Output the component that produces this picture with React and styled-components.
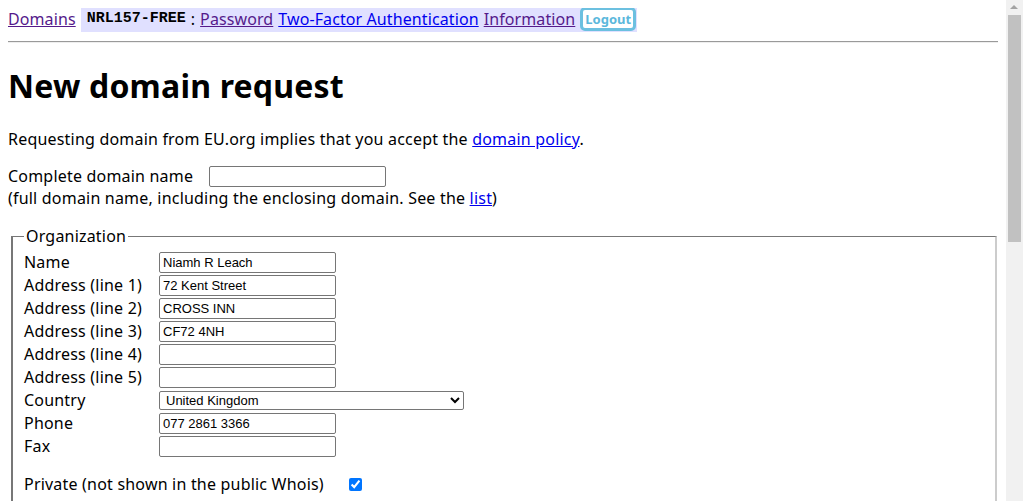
import React from "react";
import styled, { createGlobalStyle } from "styled-components";

const GlobalStyle = createGlobalStyle`
  html, body {
    background: #fff;
  }
  body {
    margin: 8px 25px 8px 8px;
    font-family: "Segoe UI", "Noto Sans", "Open Sans", sans-serif;
    font-size: 16px;
    letter-spacing: 0.2px;
    color: #000;
  }
  a {
    color: #0000ee;
  }
  a.visited {
    color: #551a8b;
  }
`;

const fields = [
  { label: "Name", value: "Niamh R Leach" },
  { label: "Address (line 1)", value: "72 Kent Street" },
  { label: "Address (line 2)", value: "CROSS INN" },
  { label: "Address (line 3)", value: "CF72 4NH" },
  { label: "Address (line 4)", value: "" },
  { label: "Address (line 5)", value: "" },
  { label: "Country", select: "United Kingdom" },
  { label: "Phone", value: "077 2861 3366" },
  { label: "Fax", value: "" },
];

const App = () => {
  return (
    <>
      <GlobalStyle />
      <TopBar>
        <a className="visited" href="#domains">Domains</a>
        <UserBox>
          <Handle>NRL157-FREE</Handle>
          <span>:</span>
          <a className="visited" href="#password">Password</a>
          <a href="#2fa">Two-Factor Authentication</a>
          <a className="visited" href="#info">Information</a>
          <LogoutButton type="button">Logout</LogoutButton>
        </UserBox>
      </TopBar>
      <Rule />
      <Title>New domain request</Title>
      <Intro>
        Requesting domain from EU.org implies that you accept the{" "}
        <a href="#policy">domain policy</a>.
      </Intro>
      <DomainBlock>
        <DomainRow>
          <span>Complete domain name</span>
          <TextInput $width={177} />
        </DomainRow>
        <div>
          (full domain name, including the enclosing domain. See the{" "}
          <a href="#list">list</a>)
        </div>
      </DomainBlock>
      <Fieldset>
        <Legend>Organization</Legend>
        <FieldGrid>
          {fields.map((f) => (
            <React.Fragment key={f.label}>
              <FieldLabel>{f.label}</FieldLabel>
              {f.select ? (
                <Select defaultValue={f.select}>
                  <option>{f.select}</option>
                </Select>
              ) : (
                <TextInput $width={177} defaultValue={f.value} />
              )}
            </React.Fragment>
          ))}
        </FieldGrid>
        <PrivateRow>
          <span>Private (not shown in the public Whois)</span>
          <Check type="checkbox" defaultChecked />
        </PrivateRow>
        <Filler />
      </Fieldset>
      <ScrollTrack>
        <ScrollArrow />
        <ScrollThumb />
      </ScrollTrack>
    </>
  );
};

export default App;

const TopBar = styled.div`
  display: flex;
  align-items: center;
  gap: 5px;
  height: 27px;
  margin-top: -3px;
  line-height: 22px;
  letter-spacing: 0.1px;
`;

const UserBox = styled.div`
  display: flex;
  align-items: center;
  gap: 5px;
  background: #e0e0ff;
  height: 27px;
  padding: 0 1px 0 6px;
`;

const Handle = styled.span`
  font-family: "Liberation Mono", "Courier New", monospace;
  font-weight: bold;
  font-size: 15px;
  letter-spacing: 0;
`;

const LogoutButton = styled.button`
  font-family: "Segoe UI", "Noto Sans", sans-serif;
  font-weight: bold;
  font-size: 13px;
  letter-spacing: 0;
  color: #5bb8dc;
  background: #fff;
  border: 3px solid #6cc0e0;
  border-radius: 5px;
  height: 24px;
  padding: 0 2px;
  line-height: 16px;
  cursor: pointer;
`;

const Rule = styled.hr`
  margin: 9px 0 0;
  border: 0;
  border-top: 1px solid #9a9a9a;
  border-bottom: 1px solid #eee;
`;

const Title = styled.h1`
  font-size: 32px;
  font-weight: bold;
  margin: 21px 0 21px;
  line-height: 43px;
`;

const Intro = styled.p`
  margin: 0 0 15px;
  line-height: 22px;
`;

const DomainBlock = styled.div`
  line-height: 22px;
  margin-bottom: 17px;
`;

const DomainRow = styled.div`
  display: flex;
  align-items: center;
  gap: 16px;
`;

const TextInput = styled.input`
  box-sizing: border-box;
  width: ${(p) => p.$width}px;
  height: 21px;
  border: 1px solid #767676;
  border-radius: 2px;
  padding: 1px 3px;
  font-family: "Liberation Sans", Arial, sans-serif;
  font-size: 13px;
  letter-spacing: 0;
  color: #000;
`;

const Select = styled.select`
  box-sizing: border-box;
  width: 305px;
  height: 19px;
  border: 1px solid #767676;
  border-radius: 2px;
  font-family: "Liberation Sans", Arial, sans-serif;
  font-size: 13px;
  letter-spacing: 0;
  padding: 0 2px;
  background: #fff;
  color: #000;
  align-self: center;
`;

const Fieldset = styled.fieldset`
  margin: 0 1px 0 3px;
  border-color: #777 #ccc #ccc #777;
  border-width: 1px 2px 2px 2px;
  border-style: solid;
  padding: 0 10px 10px 11px;
`;

const Legend = styled.legend`
  padding: 0 2px;
  line-height: 20px;
`;

const FieldGrid = styled.div`
  display: grid;
  grid-template-columns: 135px auto;
  justify-content: start;
  row-gap: 2px;
  line-height: 21px;
  margin-top: 6px;
`;

const FieldLabel = styled.span`
  line-height: 21px;
`;

const PrivateRow = styled.div`
  display: flex;
  align-items: center;
  gap: 25px;
  margin-top: 16px;
  line-height: 22px;
`;

const Check = styled.input`
  width: 13px;
  height: 13px;
  margin: 0;
  accent-color: #0075ff;
`;

const Filler = styled.div`
  height: 120px;
`;

/* stand-in for the browser's vertical scrollbar seen in the screenshot */
const ScrollTrack = styled.div`
  position: fixed;
  top: 0;
  right: 0;
  bottom: 0;
  width: 17px;
  background: #f1f1f1;
`;

const ScrollArrow = styled.div`
  position: absolute;
  top: 5px;
  left: 4px;
  width: 0;
  height: 0;
  border-left: 4px solid transparent;
  border-right: 4px solid transparent;
  border-bottom: 4px solid #a3a3a3;
`;

const ScrollThumb = styled.div`
  position: absolute;
  top: 15px;
  left: 2px;
  width: 13px;
  height: 227px;
  background: #c1c1c1;
`;
